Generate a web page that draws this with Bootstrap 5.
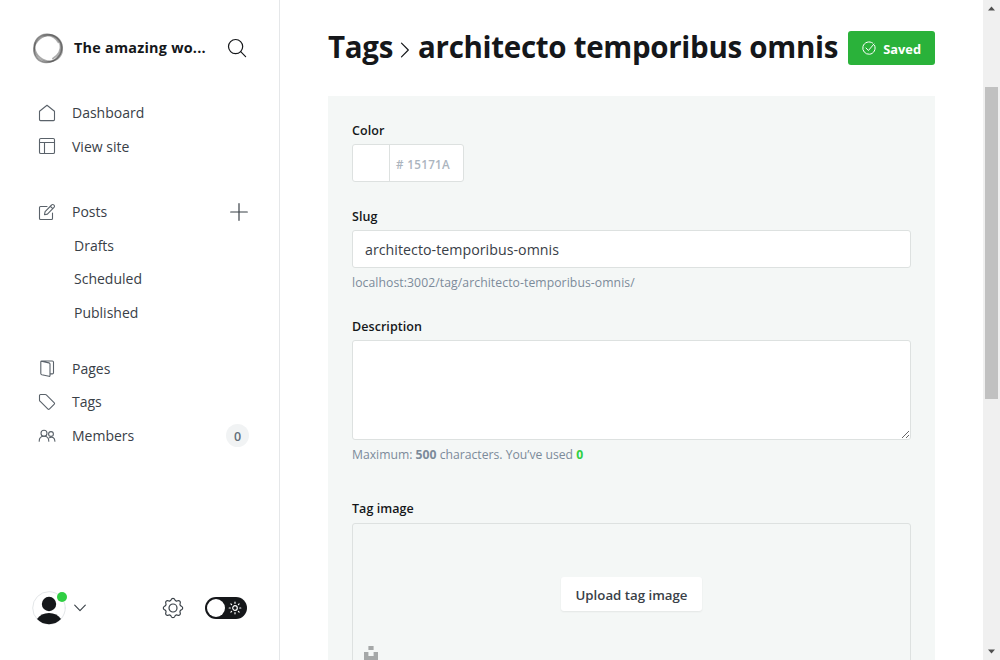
<!DOCTYPE html>
<html lang="en">
<head>
<meta charset="utf-8">
<meta name="viewport" content="width=device-width, initial-scale=1">
<title>Tags - architecto temporibus omnis</title>
<link rel="stylesheet" href="https://cdn.jsdelivr.net/npm/bootstrap@5.3.0/dist/css/bootstrap.min.css">
<style>
  body { font-family: "Open Sans", "Noto Sans", sans-serif; color: #15171a; background: #fff; }
  svg { display: block; flex: none; fill: none; stroke-linecap: round; stroke-linejoin: round; }

  /* sidebar */
  .side { width: 280px; border-right: 1px solid #e5e7e9; padding: 0 31px 0 32px; }
  .side-head { height: 96px; }
  .site-name { font-size: 14.4px; letter-spacing: .24px; font-weight: 700; margin: 0 10px 0 10px; width: 143px; white-space: nowrap; }
  .menu { padding-top: .3px; }
  .menu-row { height: 33.5px; font-size: 14px; color: #394047; line-height: 1; padding-left: 6px; }
  .menu-row svg { color: #5a626a; stroke: currentColor; margin-right: 16px; }
  .menu-row.sub-row { padding-left: 42px; }
  .menu-row svg.plus { margin: 0; color: #394047; }
  .menu-row svg.layout-icon { margin-bottom: 1px; }
  .gap-posts { margin-top: 32px; }
  .gap-pages { margin-top: 22.8px; }
  .count { width: 23px; height: 23px; margin-right: -1px; padding-top: 2px; background: #f1f3f4; font-size: 12.5px; font-weight: 600; color: #626d79; }
  .side-foot { height: 50px; margin-bottom: 27px; }
  .avatar { width: 34px; height: 34px; }
  .online { width: 10px; height: 10px; background: #30cf43; top: 1px; right: -1px; }
  .caret { margin-left: 8px; }
  .night { width: 42px; height: 22px; background: #15171a; padding: 2px 5px 2px 2px; margin: 0 1px 0 21px; }
  .knob { width: 18px; height: 18px; background: #fff; }

  /* editor */
  .editor { padding: 0 48px; }
  .editor-head { height: 96px; }
  .page-title { font-size: 29.5px; font-weight: 700; line-height: 1; letter-spacing: -.3px; white-space: nowrap; padding-bottom: 2px; }
  .page-title svg { margin: 5px 8px 0 7px; }
  .btn-saved { width: 87px; height: 34px; background: #2ab23a; border-radius: 3px; font-size: 12.8px; font-weight: 700; color: #fff; padding: 0 14px 0 14px; border: 0; }
  .btn-saved span { padding-top: 3px; }
  .panel { background: #f4f7f6; padding: 25px 24px 0; height: 564px; }
  .panel label { display: block; font-size: 12.5px; font-weight: 600; line-height: 20px; letter-spacing: .06px; margin-bottom: 3px; }
  .field { border: 1px solid #dde1e0; border-radius: 3px; background: #fff; }
  .swatch-field { width: 112px; height: 38px; margin-bottom: 25px; }
  .swatch { width: 37px; border-right: 1px solid #dde1e0; }
  .hex { font-size: 11.6px; letter-spacing: .35px; font-weight: 600; color: #abb4be; padding: 3px 0 0 6px; }
  .panel input.field { display: block; width: 100%; height: 38px; padding: 1px 12px 0; font-size: 14.2px; letter-spacing: .04px; color: #394047; }
  .panel textarea.field { display: block; width: 100%; height: 100px; }
  .hint { font-size: 12.2px; line-height: 20px; color: #7c8b9a; margin: 5px 0 0; }
  .hint.url { letter-spacing: .08px; }
  .used { color: #30cf43; }
  .for-description { margin-top: 24px; }
  .panel label.for-image { margin: 34px 0 4px; }
  .drop { height: 160px; background: transparent; }
  .btn-upload { margin-top: 53px; width: 141px; height: 34px; background: #fff; color: #394047; font-size: 13.25px; font-weight: 600; border: 0; border-radius: 3px; box-shadow: 0 1px 2px rgba(0,0,0,.07); padding: 3px 0 0; white-space: nowrap; }
  .unsplash { left: 11px; top: 122px; }

  /* scroll rail */
  .rail { width: 17px; background: #f0f0f0; padding: 6px 2px; }
  .thumb { height: 312px; background: #c1c1c1; margin-top: 76px; }
</style>
</head>
<body>
<div class="d-flex vh-100 overflow-hidden">
  <aside class="side d-flex flex-column flex-shrink-0">
    <header class="side-head d-flex align-items-center">
      <svg width="32" height="32" viewBox="0 0 32 32">
        <circle cx="15.6" cy="16.2" r="13.6" stroke="#666" stroke-opacity=".5" stroke-width="1.8"/>
        <ellipse cx="16.2" cy="15.6" rx="14.4" ry="12.9" stroke="#444" stroke-opacity=".45" stroke-width="1.7" transform="rotate(40 16 16)"/>
        <ellipse cx="15.5" cy="16.6" rx="14.6" ry="13" stroke="#444" stroke-opacity=".5" stroke-width="1.6" transform="rotate(-40 16 16)"/>
        <path d="M12 3.8q9-2.5 14.5 6.5M28.5 12q1.5 9-7.5 14.5" stroke="#777" stroke-opacity=".6" stroke-width="2"/>
      </svg>
      <span class="site-name">The amazing wo...</span>
      <svg width="20" height="20" viewBox="0 0 20 20" stroke="#15171a" stroke-width="1.2"><circle cx="8.6" cy="8.6" r="7.1"/><path d="M13.7 13.7 18.6 18.6"/></svg>
    </header>

    <nav class="menu">
      <div class="menu-row d-flex align-items-center">
        <svg width="18" height="18" viewBox="0 0 18 18" stroke-width="1.1"><path d="M1.5 7.2 9 1.2l7.5 6v8.4a1 1 0 0 1-1 1h-13a1 1 0 0 1-1-1z"/></svg>Dashboard
      </div>
      <div class="menu-row d-flex align-items-center">
        <svg class="layout-icon" width="18" height="18" viewBox="0 0 18 18" stroke-width="1.1"><rect x="1.5" y="1.5" width="15" height="15" rx="1.3"/><path d="M1.5 5.5h15M6.5 5.5v11"/></svg>View site
      </div>
      <div class="menu-row gap-posts d-flex align-items-center">
        <svg width="18" height="18" viewBox="0 0 18 18" stroke-width="1.1"><path d="M9 3.5H2.5a1 1 0 0 0-1 1v11a1 1 0 0 0 1 1h11a1 1 0 0 0 1-1V10M6.5 11.7l.6-3L13.6 2a1.5 1.5 0 0 1 2.2 0l.2.2a1.5 1.5 0 0 1 0 2.2l-6.6 6.7zM12.4 3.3l2.4 2.4"/></svg>Posts
        <svg class="plus ms-auto" width="18" height="18" viewBox="0 0 18 18" stroke-width="1.2"><path d="M9 .7v16.6M.7 9h16.6"/></svg>
      </div>
      <div class="menu-row sub-row d-flex align-items-center">Drafts</div>
      <div class="menu-row sub-row d-flex align-items-center">Scheduled</div>
      <div class="menu-row sub-row d-flex align-items-center">Published</div>
      <div class="menu-row gap-pages d-flex align-items-center">
        <svg width="18" height="18" viewBox="0 0 18 18" stroke-width="1.1"><path d="M3.3 1.2 11 2.9q1 .3 1 1.2v11.6q0 .8-1 .6l-7.2-1.6q-1-.3-1-1.2V1.8q0-.8 1-.8h10.5q1.2 0 1.2 1.2v10.6q0 1-1.2 1.1H12"/></svg>Pages
      </div>
      <div class="menu-row d-flex align-items-center">
        <svg width="18" height="18" viewBox="0 0 18 18" stroke-width="1.1"><path d="M1.5 2.5a1 1 0 0 1 1-1h4.8q.6 0 1 .4l8 8q.6.6 0 1.2l-5 5q-.7.6-1.3 0L2 8.2q-.5-.4-.5-1z"/></svg>Tags
      </div>
      <div class="menu-row d-flex align-items-center">
        <svg width="18" height="18" viewBox="0 0 18 18" stroke-width="1.1"><circle cx="6" cy="6.3" r="3"/><circle cx="13" cy="7" r="2.4"/><path d="M1.2 14.3q0-5 4.8-5t4.8 5M11.3 10.7q5.4-1.6 5.6 3.6"/></svg>Members
        <span class="count rounded-circle ms-auto d-flex align-items-center justify-content-center">0</span>
      </div>
    </nav>

    <footer class="side-foot mt-auto d-flex align-items-center">
      <div class="avatar position-relative">
        <svg width="34" height="34" viewBox="0 0 34 34">
          <circle cx="17" cy="17" r="16.3" fill="#fff" stroke="#e3e6e8"/>
          <circle cx="17" cy="13" r="7.2" fill="#15171a"/>
          <path d="M5 28q4-6 12-6t12 6q-5 5.2-12 5.2T5 28z" fill="#15171a"/>
        </svg>
        <span class="online rounded-circle position-absolute"></span>
      </div>
      <svg class="caret" width="12" height="8" viewBox="0 0 12 8" stroke="#394047" stroke-width="1.1"><path d="M.7 1.2 6 6.6l5.3-5.4"/></svg>
      <svg class="ms-auto" width="22" height="22" viewBox="0 0 22 22" stroke="#394047" stroke-width="1.2"><circle cx="11" cy="11" r="4"/><path d="M9.2 2.6a1.9 1.9 0 0 1 3.6 0 2 2 0 0 0 2.9 1.2 1.9 1.9 0 0 1 2.5 2.5 2 2 0 0 0 1.2 2.9 1.9 1.9 0 0 1 0 3.6 2 2 0 0 0-1.2 2.9 1.9 1.9 0 0 1-2.5 2.5 2 2 0 0 0-2.9 1.2 1.9 1.9 0 0 1-3.6 0 2 2 0 0 0-2.9-1.2 1.9 1.9 0 0 1-2.5-2.5 2 2 0 0 0-1.2-2.9 1.9 1.9 0 0 1 0-3.6 2 2 0 0 0 1.2-2.9 1.9 1.9 0 0 1 2.5-2.5 2 2 0 0 0 2.9-1.2z"/></svg>
      <div class="night rounded-pill d-flex align-items-center justify-content-between">
        <span class="knob rounded-circle"></span>
        <svg width="14" height="14" viewBox="0 0 14 14" stroke="#fff" stroke-width="1.2"><circle cx="7" cy="7" r="2.3"/><path d="M7 1.2v1.1M7 11.7v1.1M1.2 7h1.1M11.7 7h1.1M2.9 2.9l.7.7M10.4 10.4l.7.7M2.9 11.1l.7-.7M10.4 3.6l.7-.7"/></svg>
      </div>
    </footer>
  </aside>

  <main class="editor flex-grow-1">
    <header class="editor-head d-flex align-items-center justify-content-between">
      <h1 class="page-title d-flex align-items-center m-0">
        <span>Tags</span>
        <svg width="10" height="16" viewBox="0 0 10 16" stroke="#15171a" stroke-width="1.2"><path d="M1.5 1.2 8.3 8l-6.8 6.8"/></svg>
        <span>architecto temporibus omnis</span>
      </h1>
      <button class="btn-saved d-flex align-items-center justify-content-between">
        <svg width="14" height="14" viewBox="0 0 14 14" stroke="#fff"><path d="M12.6 4.4A6.2 6.2 0 1 1 10.6 2M4 7l2.4 2.5L12 3"/></svg>
        <span>Saved</span>
      </button>
    </header>

    <section class="panel">
      <label>Color</label>
      <div class="field swatch-field d-flex">
        <span class="swatch"></span>
        <span class="hex d-flex align-items-center"># 15171A</span>
      </div>

      <label for="slug">Slug</label>
      <input id="slug" class="field" type="text" value="architecto-temporibus-omnis">
      <p class="hint url">localhost:3002/tag/architecto-temporibus-omnis/</p>

      <label for="description" class="for-description">Description</label>
      <textarea id="description" class="field"></textarea>
      <p class="hint">Maximum: <b>500</b> characters. You’ve used <b class="used">0</b></p>

      <label class="for-image">Tag image</label>
      <div class="field drop position-relative text-center">
        <button class="btn-upload">Upload tag image</button>
        <svg class="unsplash position-absolute" width="14" height="14" viewBox="0 0 14 14"><path d="M4.4 0h5.2v4H4.4zM0 6h4.4v4h5.2V6H14v8H0z" fill="#a5a8a8"/></svg>
      </div>
    </section>
  </main>

  <div class="rail d-flex flex-column align-items-center flex-shrink-0">
    <svg width="7" height="5" viewBox="0 0 7 5"><path d="M0 4.5 3.5.5 7 4.5z" fill="#505050"/></svg>
    <div class="thumb w-100"></div>
    <svg class="mt-auto" width="7" height="5" viewBox="0 0 7 5"><path d="M0 .5 3.5 4.5 7 .5z" fill="#505050"/></svg>
  </div>
</div>
<script src="https://cdn.jsdelivr.net/npm/bootstrap@5.3.0/dist/js/bootstrap.bundle.min.js"></script>
</body>
</html>
